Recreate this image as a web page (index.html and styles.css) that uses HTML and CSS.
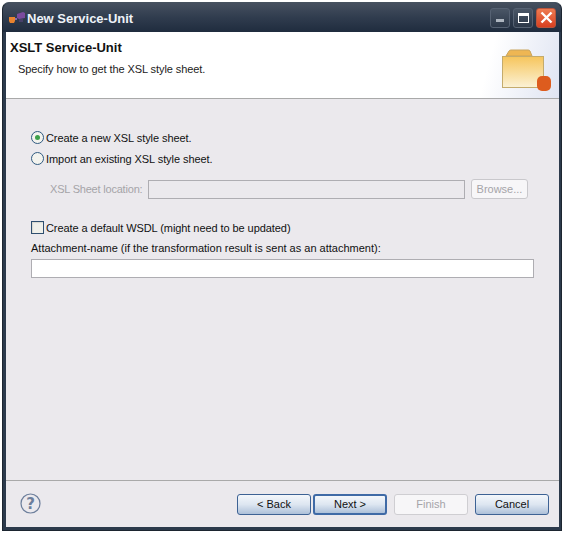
FILE: index.html
```html
<!DOCTYPE html>
<html lang="en">
<head>
  <meta charset="UTF-8" />
  <title>New Service-Unit</title>
  <link rel="stylesheet" href="styles.css">
</head>
<body>
  <div class="window">
    <div class="titlebar">
      <svg class="app-icon" width="18" height="16" viewBox="0 0 18 16">
        <path d="M9 4l6-2 2 1v5l-6 1-2-1z" fill="#7a4a9e"/>
        <rect x="11" y="9" width="4" height="3" fill="#47406a"/>
        <path d="M1 7h6v4l-1 2H2l-1-2z" fill="#e8832e"/>
        <rect x="7" y="8" width="2" height="2" fill="#8a6aa8"/>
      </svg>
      <span class="title">New Service-Unit</span>
      <div class="win-buttons">
        <div class="win-btn"><span class="min-glyph"></span></div>
        <div class="win-btn"><span class="max-glyph"></span></div>
        <div class="win-btn close">
          <svg width="15" height="15" viewBox="0 0 15 15"><path d="M2.5 2.5l10 10M12.5 2.5l-10 10" stroke="#fff" stroke-width="2.4"/></svg>
        </div>
      </div>
    </div>

    <div class="header">
      <div class="header-text">
        <h1>XSLT Service-Unit</h1>
        <p>Specify how to get the XSL style sheet.</p>
      </div>
      <svg class="folder" width="52" height="44" viewBox="0 0 52 44">
        <defs>
          <linearGradient id="folderfill" x1="0" y1="0" x2="0" y2="1">
            <stop offset="0" stop-color="#f6c55c"/>
            <stop offset="1" stop-color="#fbf2d6"/>
          </linearGradient>
        </defs>
        <path d="M7 7l3-5q.5-1 2-1h17q1.500 0 2 1l2 5z" fill="#eeb653" stroke="#c9a45c"/>
        <rect x="3.500" y="7.500" width="41" height="31" fill="url(#folderfill)" stroke="#c4ab6c"/>
        <rect x="38" y="27" width="14" height="15" rx="5" fill="#dd5c1e"/>
      </svg>
    </div>

    <div class="content">
      <label class="option first"><span class="radio checked"></span>Create a new XSL style sheet.</label>
      <label class="option"><span class="radio"></span>Import an existing XSL style sheet.</label>

      <div class="location">
        <span class="location-label">XSL Sheet location:</span>
        <div class="field disabled"></div>
        <div class="btn browse">Browse...</div>
      </div>

      <label class="option wsdl"><span class="check"></span>Create a default WSDL (might need to be updated)</label>
      <div class="attach-label">Attachment-name (if the transformation result is sent as an attachment):</div>
      <div class="field attach"></div>
    </div>

    <div class="footer">
      <svg class="help" width="21" height="21" viewBox="0 0 21 21">
        <circle cx="10.500" cy="10.500" r="9.500" fill="none" stroke="#6d7f9c" stroke-width="1.200"/>
        <text x="10.500" y="16" text-anchor="middle" class="help-mark">?</text>
      </svg>
      <div class="footer-buttons">
        <div class="btn blue">&lt; Back</div>
        <div class="btn blue default">Next &gt;</div>
        <div class="btn finish">Finish</div>
        <div class="btn blue cancel">Cancel</div>
      </div>
    </div>
  </div>
</body>
</html>
```
FILE: styles.css
```css
html, body {
  margin: 0;
  padding: 0;
}

body {
  background: #fff;
  font-family: "Liberation Sans", sans-serif;
  font-size: 11px;
  color: #111;
  padding: 2px 0 0 2px;
}

.window {
  width: 560px;
  height: 529px;
  box-sizing: border-box;
  display: flex;
  flex-direction: column;
  background: #2c3a4c;
  border-radius: 7px 7px 0 0;
  padding: 0 2px 3px 3px;
  border: 1px solid #1c2530;
  border-top-color: #46525f;
}

.titlebar {
  height: 29px;
  flex: none;
  display: flex;
  align-items: center;
  margin: 0 -2px 0 -3px;
  padding: 0 5px 0 5px;
  border-radius: 7px 7px 0 0;
  background: linear-gradient(#46505f, #303c4e 50%, #1f2c3e);
}

.app-icon {
  margin-right: 1px;
}

.title {
  color: #eef2f8;
  font-size: 13px;
  font-weight: bold;
  flex: 1;
  padding-top: 2px;
}

.win-buttons {
  display: flex;
  gap: 3px;
}

.win-btn {
  width: 20px;
  height: 20px;
  box-sizing: border-box;
  border: 1px solid #566273;
  border-radius: 3px;
  background: linear-gradient(#4a5666, #2c3849);
  display: flex;
  align-items: center;
  justify-content: center;
  position: relative;
}

.win-btn.close {
  background: linear-gradient(#ee7c52, #d83f20);
  border-color: #b9553c;
}

.min-glyph {
  width: 8px;
  height: 3px;
  background: #aeb6c0;
  margin-top: 6px;
}

.max-glyph {
  width: 11px;
  height: 10px;
  box-sizing: border-box;
  border: 1px solid #fff;
  border-top-width: 3px;
}

.header {
  height: 66px;
  flex: none;
  display: flex;
  justify-content: space-between;
  background: linear-gradient(105deg, #fff 86%, #dfe4f2);
  border-bottom: 1px solid #a9a9a9;
}

.header-text {
  padding-left: 4px;
}

h1 {
  margin: 8px 0 0;
  font-size: 13px;
  font-weight: bold;
  color: #111;
}

.header-text p {
  margin: 8px 0 0 8px;
  color: #222;
  letter-spacing: -0.08px;
}

.folder {
  margin: 17px 8px 0 0;
}

.content {
  flex: 1;
  background: #ebe9ed;
  padding: 28px 25px 0 25px;
  border-bottom: 1px solid #a9a9a9;
}

.option {
  display: flex;
  align-items: center;
  height: 21px;
  gap: 2px;
  letter-spacing: -0.07px;
}

.radio {
  width: 13px;
  height: 13px;
  box-sizing: border-box;
  border: 1px solid #2f5a80;
  border-radius: 50%;
  background: #f3f3ee;
  display: flex;
  align-items: center;
  justify-content: center;
}

.radio.checked::after {
  content: "";
  width: 5px;
  height: 5px;
  border-radius: 50%;
  background: #3da04a;
}

.check {
  width: 13px;
  height: 13px;
  box-sizing: border-box;
  border: 1px solid #2f4f6f;
  background: #f0f0ea;
  box-shadow: inset 1px 1px 1px #d8d8d0;
}

.location {
  display: flex;
  align-items: center;
  height: 20px;
  margin-top: 10px;
  padding-left: 19px;
  color: #a5a4a8;
}

.location-label {
  width: 98px;
  flex: none;
  white-space: nowrap;
  letter-spacing: -0.2px;
}

.field {
  box-sizing: border-box;
  border: 1px solid #aeadb2;
}

.field.disabled {
  width: 317px;
  height: 19px;
  flex: none;
  background: #ebe9ed;
}

.field.attach {
  width: 503px;
  height: 19px;
  background: #fff;
}

.btn {
  box-sizing: border-box;
  display: flex;
  align-items: center;
  justify-content: center;
  border-radius: 3px;
}

.browse {
  width: 57px;
  height: 20px;
  margin-left: 6px;
  flex: none;
  background: #f7f6f8;
  border: 1px solid #c9c8cc;
  color: #a5a4a8;
}

.wsdl {
  margin-top: 18px;
}

.attach-label {
  margin: 3px 0 4px;
  line-height: 14px;
}

.footer {
  height: 46px;
  flex: none;
  background: #ebe9ed;
  display: flex;
  align-items: center;
  justify-content: space-between;
  padding: 0 10px 0 14px;
}

.help {
  margin-top: -2px;
}

.help-mark {
  font-family: "DejaVu Sans", sans-serif;
  font-size: 15px;
  font-weight: bold;
  fill: #6d7f9c;
}

.footer-buttons {
  display: flex;
}

.footer-buttons .btn {
  width: 74px;
  height: 21px;
  margin-left: 2px;
}

.blue {
  border: 1px solid #3d6294;
  background: linear-gradient(#f4f7fb, #dde6f1 50%, #adc0d9);
  color: #111;
}

.blue.default {
  border: 2px solid #3f6aa6;
}

.finish {
  background: #f7f6f8;
  border: 1px solid #cfced2;
  color: #a5a4a8;
}

.footer-buttons .finish {
  margin-left: 7px;
}

.footer-buttons .cancel {
  margin-left: 7px;
}
```
